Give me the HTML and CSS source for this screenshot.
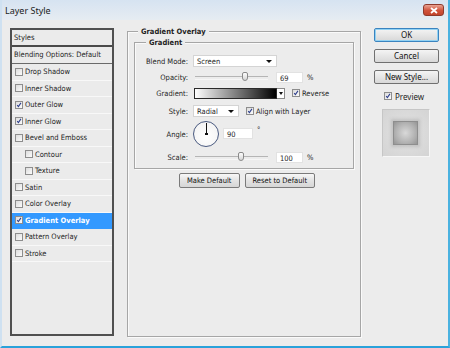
FILE: index.html
```html
<!DOCTYPE html>
<html lang="en">
<head>
  <meta charset="UTF-8" />
  <title>Layer Style</title>
  <link rel="stylesheet" href="styles.css">
</head>
<body>
  <div class="window">
    <div class="titlebar">
      <span class="title">Layer Style</span>
      <span class="close">
        <svg width="8" height="7" viewBox="0 0 8 7"><path d="M1 1 L7 6 M7 1 L1 6" stroke="#fff" stroke-width="1.8" /></svg>
      </span>
    </div>

    <div class="content">
      <!-- Left: style list -->
      <div class="styles-panel">
        <div class="panel-head">Styles</div>
        <div class="panel-blend">Blending Options: Default</div>
        <ul class="style-list">
          <li><span class="cb"></span>Drop Shadow</li>
          <li><span class="cb"></span>Inner Shadow</li>
          <li><span class="cb on"><svg viewBox="0 0 8 8"><path d="M1.6 4.2 L3.2 6.2 L6.6 1.2" /></svg></span>Outer Glow</li>
          <li><span class="cb on"><svg viewBox="0 0 8 8"><path d="M1.6 4.2 L3.2 6.2 L6.6 1.2" /></svg></span>Inner Glow</li>
          <li><span class="cb"></span>Bevel and Emboss</li>
          <li class="sub"><span class="cb"></span>Contour</li>
          <li class="sub"><span class="cb"></span>Texture</li>
          <li><span class="cb"></span>Satin</li>
          <li><span class="cb"></span>Color Overlay</li>
          <li class="active"><span class="cb on"><svg viewBox="0 0 8 8"><path d="M1.6 4.2 L3.2 6.2 L6.6 1.2" /></svg></span>Gradient Overlay</li>
          <li><span class="cb"></span>Pattern Overlay</li>
          <li><span class="cb"></span>Stroke</li>
        </ul>
      </div>

      <!-- Middle: settings -->
      <div class="group outer">
        <span class="group-title">Gradient Overlay</span>
        <div class="group inner">
          <span class="group-title">Gradient</span>
          <div class="form">
            <label>Blend Mode:</label>
            <div class="ctl">
              <div class="select wide">Screen<span class="arrow"></span></div>
            </div>

            <label>Opacity:</label>
            <div class="ctl">
              <div class="slider"><span class="thumb" style="left: 69%"></span></div>
              <div class="num">69</div>
              <span class="unit">%</span>
            </div>

            <label>Gradient:</label>
            <div class="ctl">
              <div class="gradient-bar"></div>
              <div class="grad-drop"><span class="arrow"></span></div>
              <span class="cb on gap-left"><svg viewBox="0 0 8 8"><path d="M1.6 4.2 L3.2 6.2 L6.6 1.2" /></svg></span>
              <span class="cb-label">Reverse</span>
            </div>

            <label>Style:</label>
            <div class="ctl">
              <div class="select narrow">Radial<span class="arrow"></span></div>
              <span class="cb on gap-left"><svg viewBox="0 0 8 8"><path d="M1.6 4.2 L3.2 6.2 L6.6 1.2" /></svg></span>
              <span class="cb-label">Align with Layer</span>
            </div>

            <label>Angle:</label>
            <div class="ctl">
              <div class="dial"><span class="hand"></span></div>
              <div class="num angle">90</div>
              <span class="degree">°</span>
            </div>

            <label>Scale:</label>
            <div class="ctl">
              <div class="slider"><span class="thumb" style="left: 63%"></span></div>
              <div class="num">100</div>
              <span class="unit">%</span>
            </div>
          </div>
        </div>
        <div class="defaults">
          <button class="small-btn">Make Default</button>
          <button class="small-btn">Reset to Default</button>
        </div>
      </div>

      <!-- Right: actions -->
      <div class="actions">
        <button class="btn default">OK</button>
        <button class="btn">Cancel</button>
        <button class="btn">New Style...</button>
        <div class="preview-check">
          <span class="cb on"><svg viewBox="0 0 8 8"><path d="M1.6 4.2 L3.2 6.2 L6.6 1.2" /></svg></span>
          <span>Preview</span>
        </div>
        <div class="swatch"><div class="swatch-inner"></div></div>
      </div>
    </div>
  </div>
</body>
</html>
```

FILE: styles.css
```css
* { box-sizing: border-box; }
body { margin: 0; background: #fff; font-family: "DejaVu Sans Condensed", "DejaVu Sans", sans-serif; font-size: 7.5px; color: #1e1e1e; }

.window { width: 450px; height: 348px; background: #ececec; border-left: 2px solid #cfe1f1; border-right: 2px solid #4ab2e0; border-bottom: 2px solid #2aa2da; display: flex; flex-direction: column; }
.titlebar { height: 20px; flex: none; display: flex; align-items: center; justify-content: space-between; padding: 0 4px 0 3px; background: linear-gradient(#d6e3f1, #e6ecf2); }
.title { font-family: "Noto Sans", sans-serif; font-size: 9px; color: #1b1b1b; }
.close { width: 21px; height: 12px; display: flex; align-items: center; justify-content: center; border: 1px solid #8e3a2c; border-radius: 3px; background: linear-gradient(#e9a393, #d0533b 55%, #c2442c); }

.content { display: flex; align-items: flex-start; padding: 8px 0 0 8px; }

/* style list */
.styles-panel { width: 104px; height: 308px; border: 2px solid #505050; background: #ebebeb; flex: none; }
.panel-head { height: 17px; line-height: 15px; padding-left: 2px; border-bottom: 2px solid #4a4a4a; }
.panel-blend { height: 17px; line-height: 16px; padding-left: 2px; border-bottom: 1px solid #6a6a6a; }
.style-list { list-style: none; margin: 0; padding: 0; }
.style-list li { height: 16.5px; display: flex; align-items: center; padding-left: 3px; border-bottom: 1px solid #f8f8f8; }
.style-list li.sub { padding-left: 13px; }
.style-list li.active { background: #3399ff; color: #fff; font-weight: bold; border-bottom-color: #3399ff; }
.style-list .cb { margin-right: 2px; }

/* checkbox */
.cb { width: 8px; height: 8px; flex: none; display: inline-block; border: 1px solid #8d8d8d; background: linear-gradient(135deg, #dcdcdc, #fbfbfb); }
.cb svg { display: block; width: 6px; height: 6px; }
.cb svg path { fill: none; stroke: #2d3e8c; stroke-width: 1.4; }
.cb-label { margin-left: 2px; }
.gap-left { margin-left: 7px; }

/* group boxes */
.group { position: relative; border: 1px solid #a6a6a6; box-shadow: inset 1px 1px 0 #fafafa, 1px 1px 0 #fafafa; }
.group-title { position: absolute; top: -6px; left: 10px; padding: 0 3px; background: #ececec; font-weight: bold; line-height: 11px; }
.outer { width: 234px; height: 306px; margin: 3px 0 0 13px; padding: 10px 0 0 6px; flex: none; }
.inner { width: 220px; height: 127px; padding: 10px 0 0 0; }
.inner .group-title { left: 11px; }

.form { display: grid; grid-template-columns: 53px auto; grid-template-rows: 16px 16px 16px 20px 26px 20px; column-gap: 5px; align-items: center; }
.form label { text-align: right; }
.ctl { display: flex; align-items: center; }

.select { position: relative; height: 12px; line-height: 11px; padding-left: 3px; background: #fff; border: 1px solid #d4d4d4; }
.select.wide { width: 84px; }
.select.narrow { width: 46px; }
.arrow { width: 0; height: 0; border-left: 3px solid transparent; border-right: 3px solid transparent; border-top: 3px solid #111; }
.select .arrow { position: absolute; right: 4px; top: 4px; }

.slider { position: relative; width: 73px; height: 12px; margin-left: 2px; }
.slider::before { content: ""; position: absolute; left: 0; right: 0; top: 5px; height: 2px; border-top: 1px solid #b5b5b5; border-bottom: 1px solid #f6f6f6; }
.thumb { position: absolute; top: 1px; width: 6px; height: 9px; margin-left: -3px; border: 1px solid #8a8a8a; border-radius: 2px 2px 3px 3px; background: linear-gradient(#fdfdfd, #d6d6d6); }
.num { width: 27px; height: 11px; line-height: 11px; padding-left: 3px; background: #fff; border: 1px solid #e2e2e2; margin-left: 8px; }
.unit { margin-left: 4px; }

.gradient-bar { width: 83px; height: 11px; margin-left: 1px; border: 1px solid #2a2a2a; background: linear-gradient(to right, #fff, #000); }
.grad-drop { width: 8px; height: 11px; display: flex; align-items: center; justify-content: center; background: #fff; border: 1px solid #8a8a8a; border-left: none; }
.grad-drop .arrow { border-left-width: 2px; border-right-width: 2px; }

.dial { position: relative; width: 26px; height: 26px; border: 1px solid #4a5a80; border-radius: 50%; background: radial-gradient(circle at 50% 60%, #fff, #f0f0f0); }
.hand { position: absolute; left: 11.5px; top: 1px; width: 1px; height: 11px; background: #111; }
.hand::after { content: ""; position: absolute; left: -1px; bottom: -1px; width: 3px; height: 2px; background: #111; }
.num.angle { width: 30px; margin-left: 4px; margin-top: -1px; }
.degree { margin-left: 4px; align-self: flex-start; margin-top: 4px; }

.defaults { display: flex; justify-content: center; gap: 5px; margin-top: 4px; }
.small-btn { height: 15px; padding: 0 7px; font-family: inherit; font-size: 7.5px; color: #111; border: 1px solid #7a7a7a; border-radius: 2px; background: linear-gradient(#f7f7f7, #e3e3e3 50%, #d6d6d6); }

/* right column */
.actions { width: 65px; margin-left: 13px; display: flex; flex-direction: column; flex: none; }
.btn { height: 14px; margin-bottom: 7px; padding: 0; font-family: "Noto Sans", sans-serif; font-size: 8px; line-height: 12px; color: #111; border: 1px solid #707070; border-radius: 2px; background: linear-gradient(#f4f4f4, #e6e6e6 50%, #d8d8d8); }
.btn.default { border-color: #3b84bf; box-shadow: inset 0 0 0 1px #93d2f3; }
.preview-check { display: flex; align-items: center; gap: 3px; padding-left: 10px; font-family: "Noto Sans", sans-serif; font-size: 8px; height: 10px; }
.swatch { width: 48px; height: 48px; margin: 8px 0 0 8px; padding: 11px 0 0 10px; border: 1px solid #c6c6c6; border-right-color: #f6f6f6; border-bottom-color: #f6f6f6; background: radial-gradient(circle, #e2e2e2, #d4d4d4); }
.swatch-inner { width: 25px; height: 24px; border: 1px solid #8e8e8e; background: radial-gradient(circle, #d9d9d9, #b0b0b0 65%, #959595); box-shadow: 0 0 3px 2px rgba(120, 120, 120, 0.25); }
```
